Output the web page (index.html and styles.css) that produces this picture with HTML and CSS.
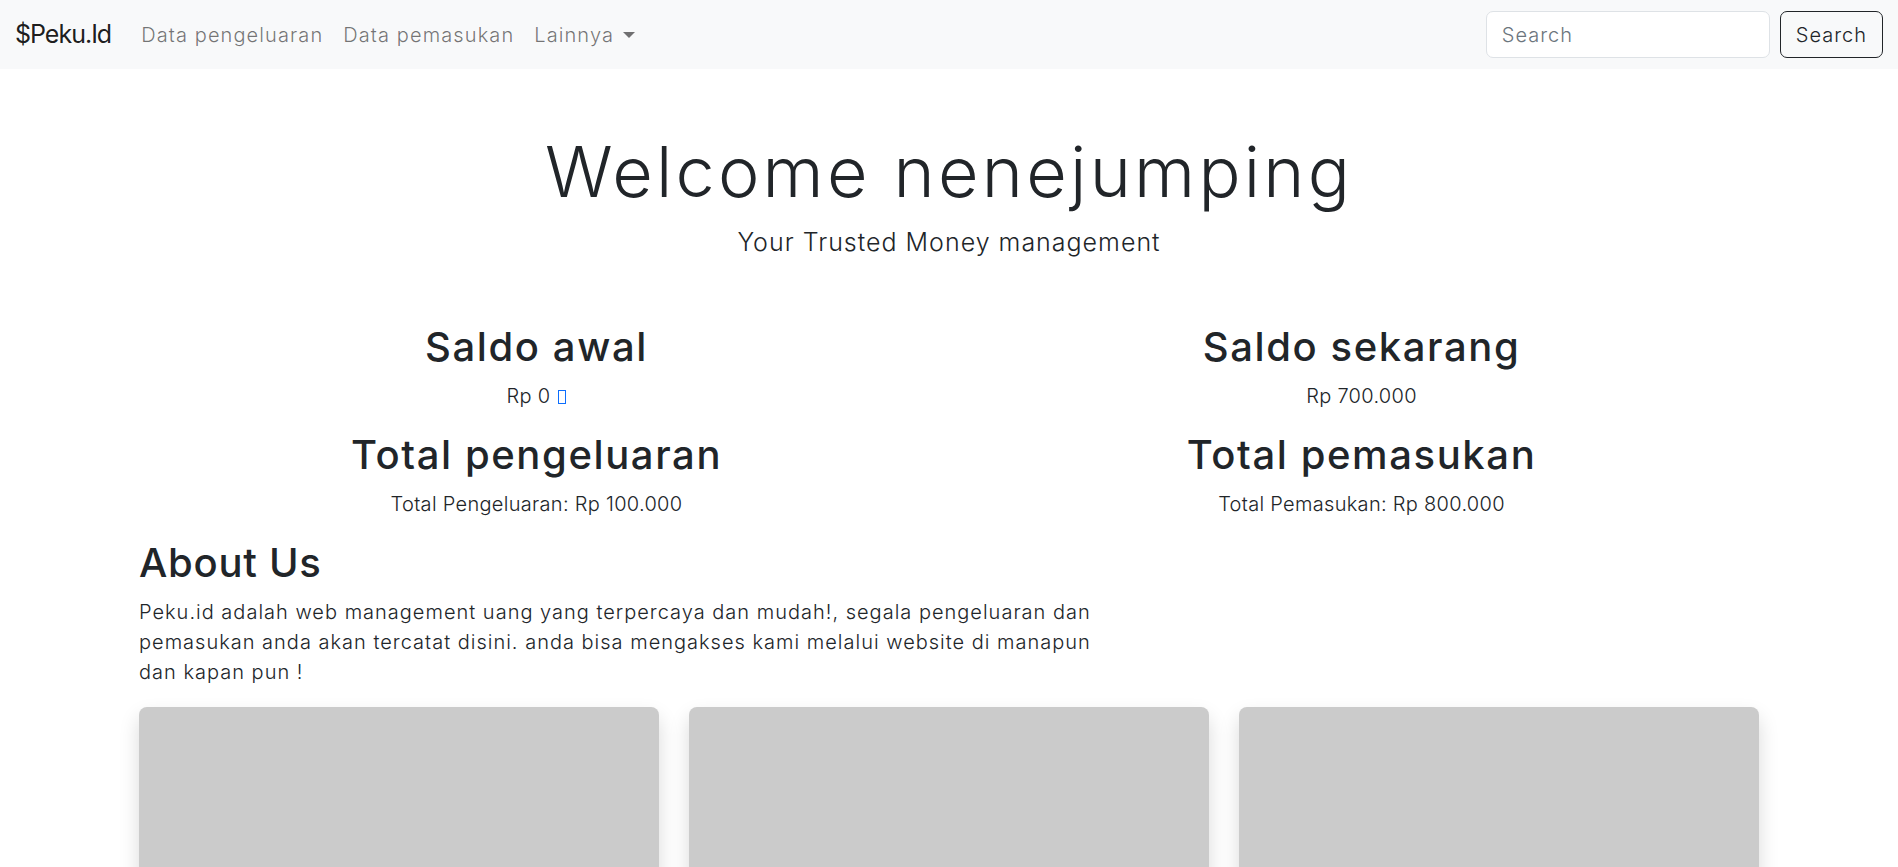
FILE: index.html
```html
<!DOCTYPE html>
<html lang="id">
<head>
<meta charset="utf-8">
<title>Peku.Id</title>
<link rel="stylesheet" href="styles.css">
</head>
<body>
<nav class="navbar">
  <div class="nav-left">
    <a class="brand" href="#">$Peku.Id</a>
    <ul class="nav-links">
      <li><a href="#">Data pengeluaran</a></li>
      <li><a href="#">Data pemasukan</a></li>
      <li><a href="#" class="dropdown">Lainnya <span class="caret"></span></a></li>
    </ul>
  </div>
  <form class="search">
    <input type="search" placeholder="Search">
    <button type="button">Search</button>
  </form>
</nav>

<main class="container">
  <header class="hero">
    <h1>Welcome nenejumping</h1>
    <p class="lead">Your Trusted Money management</p>
  </header>

  <section class="stats">
    <div class="stat-col">
      <h2>Saldo awal</h2>
      <p>Rp 0 <span class="tofu"></span></p>
      <h2>Total pengeluaran</h2>
      <p>Total Pengeluaran: Rp 100.000</p>
    </div>
    <div class="stat-col">
      <h2>Saldo sekarang</h2>
      <p>Rp 700.000</p>
      <h2>Total pemasukan</h2>
      <p>Total Pemasukan: Rp 800.000</p>
    </div>
  </section>

  <section class="about">
    <h2>About Us</h2>
    <p>Peku.id adalah web management uang yang terpercaya dan mudah!, segala pengeluaran dan<br>pemasukan anda akan tercatat disini. anda bisa mengakses kami melalui website di manapun<br>dan kapan pun !</p>
  </section>

  <section class="cards">
    <div class="card"></div>
    <div class="card"></div>
    <div class="card"></div>
  </section>
</main>
</body>
</html>
```

FILE: styles.css
```css
* { box-sizing: border-box; }

html, body {
  margin: 0;
  padding: 0;
}

body {
  font-family: Inter, "Open Sans", sans-serif;
  font-weight: 300;
  font-size: 20px;
  line-height: 1.5;
  letter-spacing: 0.05em;
  color: #212529;
  background: #fff;
  overflow: hidden;
}

a { text-decoration: none; }

.navbar {
  display: flex;
  align-items: center;
  justify-content: space-between;
  height: 69px;
  padding: 0 15px;
  background: #f8f9fa;
}

.nav-left {
  display: flex;
  align-items: center;
}

.brand {
  font-size: 25px;
  font-weight: 400;
  letter-spacing: -0.04em;
  color: rgba(0, 0, 0, 0.9);
  margin-right: 20px;
  line-height: 37px;
}

.nav-links {
  display: flex;
  list-style: none;
  margin: 0;
  padding: 0;
}

.nav-links a {
  display: block;
  padding: 10px 10px;
  color: rgba(0, 0, 0, 0.55);
  font-weight: 300;
  letter-spacing: 0.055em;
}

.caret {
  display: inline-block;
  margin-left: 2px;
  vertical-align: 4px;
  border-top: 6px solid;
  border-left: 6px solid transparent;
  border-right: 6px solid transparent;
}

.search {
  display: flex;
  align-items: center;
  gap: 10px;
}

.search input {
  width: 284px;
  height: 47px;
  padding: 7px 15px;
  font: inherit;
  font-weight: 300;
  letter-spacing: 0.05em;
  color: #212529;
  border: 1px solid #dee2e6;
  border-radius: 7px;
  background: #fff;
}

.search input::placeholder { color: #6c757d; }

.search button {
  height: 47px;
  padding: 7px 15px;
  font: inherit;
  font-weight: 300;
  letter-spacing: 0.05em;
  color: #212529;
  background: transparent;
  border: 1px solid #212529;
  border-radius: 7px;
}

.container {
  width: 1650px;
  margin: 0 auto;
  padding: 0 15px;
}

.hero {
  margin-top: 61px;
  text-align: center;
}

.hero h1 {
  margin: 0 0 10px;
  font-size: 70px;
  font-weight: 300;
  line-height: 1.2;
  letter-spacing: 0.046em;
}

.lead {
  margin: 0;
  font-size: 25px;
  font-weight: 300;
  letter-spacing: 0.04em;
}

.stats {
  display: grid;
  grid-template-columns: 1fr 1fr;
  column-gap: 30px;
  margin-top: 61px;
  text-align: center;
}

h2 {
  margin: 0 0 10px;
  font-size: 40px;
  font-weight: 500;
  line-height: 1.2;
  letter-spacing: 0.04em;
}

.stat-col p {
  margin: 0 0 20px;
  letter-spacing: 0.015em;
}

.tofu {
  display: inline-block;
  width: 8px;
  height: 14px;
  margin-left: 2px;
  border: 1px solid #0d6efd;
  vertical-align: -1px;
}

.about h2 {
  letter-spacing: 0.018em;
}

.about p {
  margin: 0 0 20px;
}

.cards {
  display: grid;
  grid-template-columns: repeat(3, 1fr);
  column-gap: 30px;
}

.card {
  height: 320px;
  background: #cbcbcb;
  border-radius: 8px;
  box-shadow: 0 10px 20px rgba(0, 0, 0, 0.15);
}
```
